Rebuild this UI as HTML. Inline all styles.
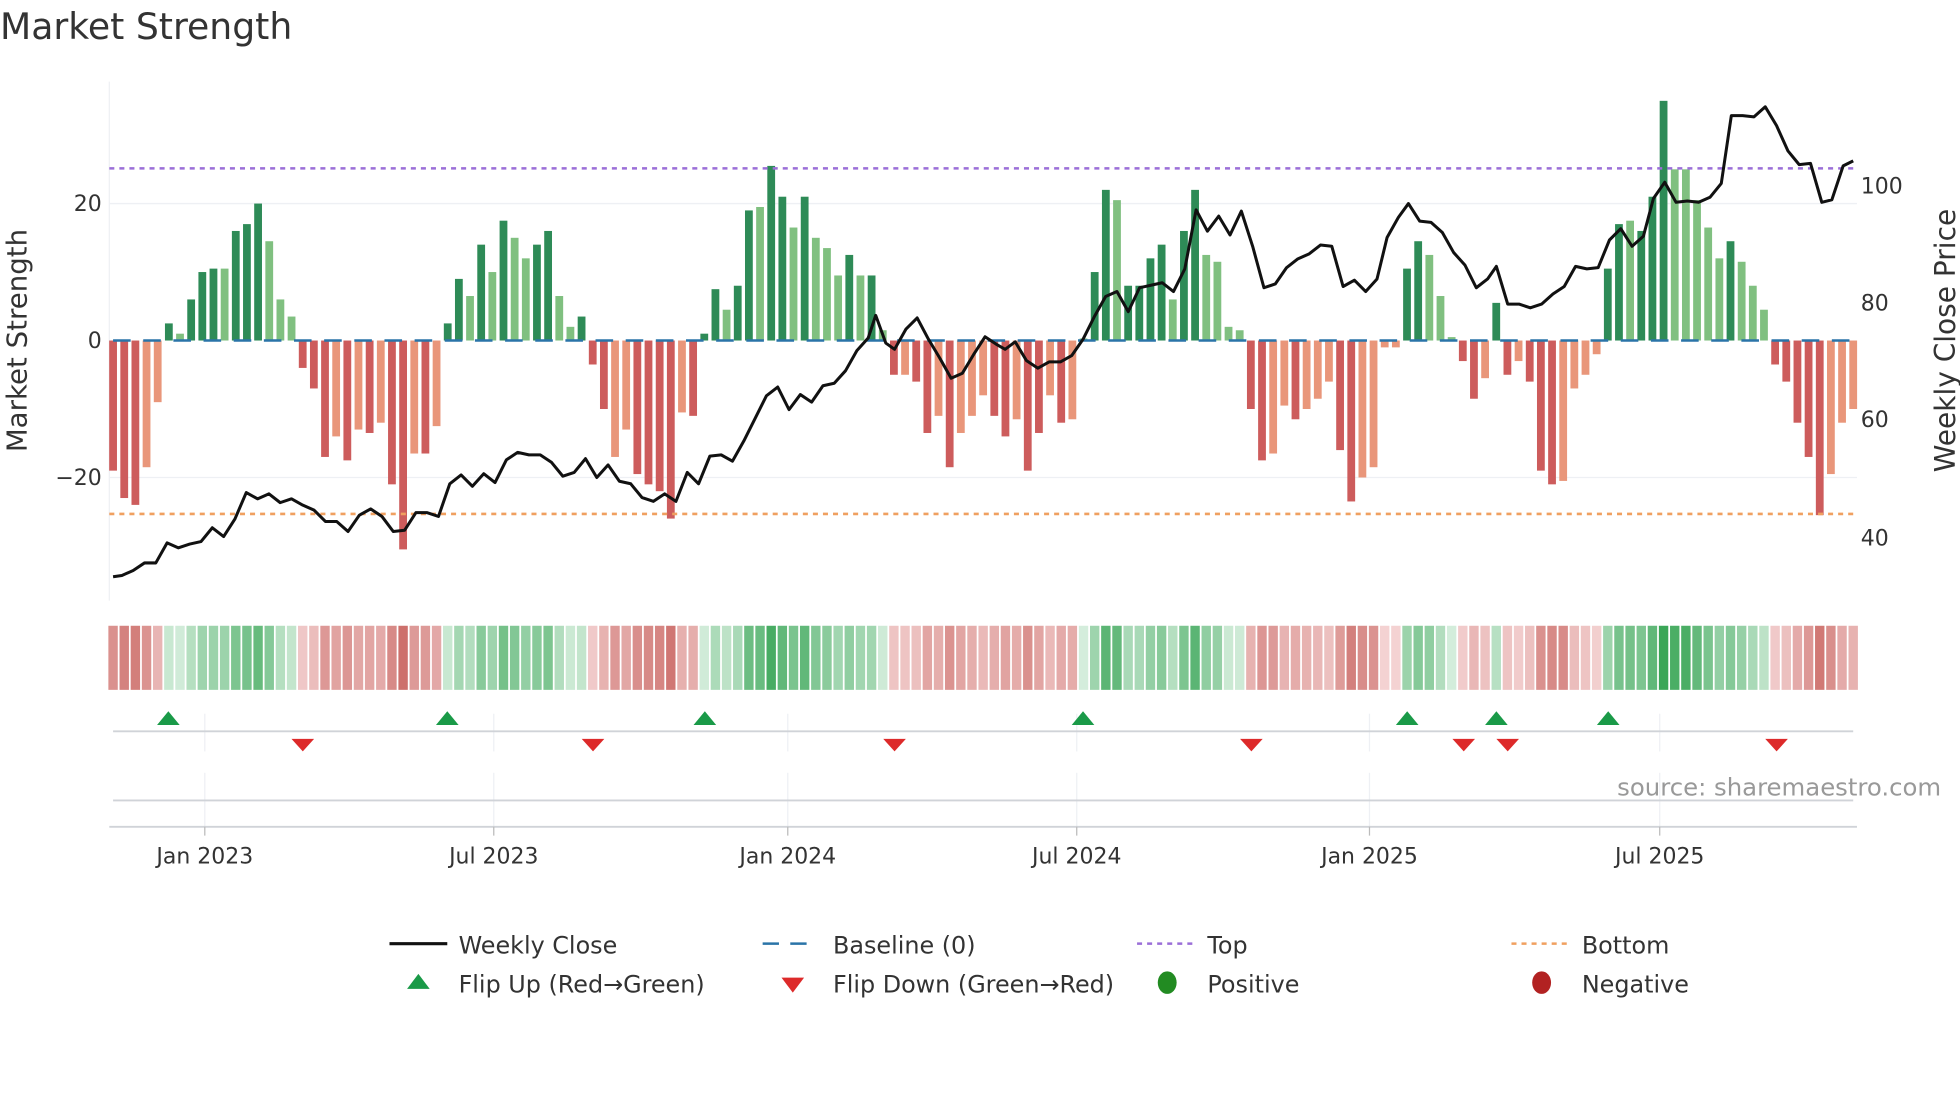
<!DOCTYPE html>
<html><head><meta charset="utf-8"><style>
html,body{margin:0;padding:0;background:#fff;width:1960px;height:1102px;overflow:hidden}
svg{display:block;font-family:"DejaVu Sans","Liberation Sans",sans-serif}
</style></head><body>
<svg id="s" width="1960" height="1102" viewBox="0 0 1560 877" preserveAspectRatio="none" xmlns="http://www.w3.org/2000/svg">
<text x="0" y="31" font-size="28.8" fill="#333">Market Strength</text>
<g stroke="#eef0f4" stroke-width="1">
<line x1="87" y1="162" x2="1478" y2="162"/><line x1="87" y1="380" x2="1478" y2="380"/>
<line x1="87" y1="65" x2="87" y2="478"/>
</g>
<g id="bars"></g>
<line x1="87" y1="134" x2="1478" y2="134" stroke="#9b6fd8" stroke-width="2" stroke-dasharray="4 4"/>
<line x1="87" y1="409" x2="1478" y2="409" stroke="#f0a060" stroke-width="2" stroke-dasharray="4 4"/>
<line x1="90" y1="271" x2="1478" y2="271" stroke="#2a74a8" stroke-width="2" stroke-dasharray="14 10"/>
<polyline id="price" fill="none" stroke="#111" stroke-width="2.4" stroke-linejoin="round"/>
<g font-size="17.5" fill="#333">
<text x="81" y="168" text-anchor="end">20</text>
<text x="81" y="277" text-anchor="end">0</text>
<text x="81" y="386" text-anchor="end">−20</text>
<text x="1481" y="154">100</text><text x="1481" y="247">80</text>
<text x="1481" y="340">60</text><text x="1481" y="434">40</text>
</g>
<text transform="translate(21,271) rotate(-90)" text-anchor="middle" font-size="22" fill="#333">Market Strength</text>
<text transform="translate(1556,271) rotate(-90)" text-anchor="middle" font-size="22.3" fill="#333">Weekly Close Price</text>
<g id="heat"></g>
<g stroke="#eef0f4" stroke-width="1" id="vg"></g>
<line x1="90" y1="582" x2="1475" y2="582" stroke="#d0d3d8" stroke-width="1.5"/>
<line x1="90" y1="637" x2="1475" y2="637" stroke="#d0d3d8" stroke-width="1.5"/>
<line x1="87" y1="658" x2="1478" y2="658" stroke="#d0d3d8" stroke-width="1.5"/>
<g id="flips"></g>
<text x="1545" y="633" text-anchor="end" font-size="19.4" fill="#999">source: sharemaestro.com</text>
<g font-size="17.5" fill="#333" text-anchor="middle" id="ticks"></g>
<g font-size="19" fill="#333">
<line x1="310" y1="751" x2="356" y2="751" stroke="#111" stroke-width="2.5"/><text x="365" y="759">Weekly Close</text>
<line x1="607" y1="751" x2="651" y2="751" stroke="#2a74a8" stroke-width="2" stroke-dasharray="13 9"/><text x="663" y="759">Baseline (0)</text>
<line x1="905" y1="751" x2="949" y2="751" stroke="#9b6fd8" stroke-width="2" stroke-dasharray="4 4"/><text x="961" y="759">Top</text>
<line x1="1203" y1="751" x2="1247" y2="751" stroke="#f0a060" stroke-width="2" stroke-dasharray="4 4"/><text x="1259" y="759">Bottom</text>
<polygon points="324,787 342,787 333,775" fill="#1a9a48"/><text x="365" y="790">Flip Up (Red→Green)</text>
<polygon points="622,778 640,778 631,790" fill="#dd2a2a"/><text x="663" y="790">Flip Down (Green→Red)</text>
<ellipse cx="929" cy="782" rx="7.5" ry="9" fill="#228b22"/><text x="961" y="790">Positive</text>
<ellipse cx="1227" cy="782" rx="7.5" ry="9" fill="#b22222"/><text x="1259" y="790">Negative</text>
</g>
</svg>
<script>
var NS="http://www.w3.org/2000/svg";
function el(t,a,p){var e=document.createElementNS(NS,t);for(var k in a)e.setAttribute(k,a[k]);document.getElementById(p).appendChild(e);return e;}
var V=[[-19,1],[-23,1],[-24,1],[-18.5,0],[-9,0],[2.5,1],[1,0],[6,1],[10,1],[10.5,1],[10.5,0],[16,1],[17,1],[20,1],[14.5,0],[6,0],[3.5,0],
[-4,1],[-7,1],[-17,1],[-14,0],[-17.5,1],[-13,0],[-13.5,1],[-12,0],[-21,1],[-30.5,1],[-16.5,0],[-16.5,1],[-12.5,0],
[2.5,1],[9,1],[6.5,0],[14,1],[10,0],[17.5,1],[15,0],[12,0],[14,1],[16,1],[6.5,0],[2,0],[3.5,1],
[-3.5,1],[-10,1],[-17,0],[-13,0],[-19.5,1],[-21,1],[-22,1],[-26,1],[-10.5,0],[-11,1],
[1,1],[7.5,1],[4.5,0],[8,1],[19,1],[19.5,0],[25.5,1],[21,1],[16.5,0],[21,1],[15,0],[13.5,0],[9.5,0],[12.5,1],[9.5,0],[9.5,1],[1.5,0],
[-5,1],[-5,0],[-6,1],[-13.5,1],[-11,0],[-18.5,1],[-13.5,0],[-11,0],[-8,0],[-11,1],[-14,1],[-11.5,0],[-19,1],[-13.5,1],[-8,0],[-12,1],[-11.5,0],
[0.3,0],[10,1],[22,1],[20.5,0],[8,1],[8,1],[12,1],[14,1],[6,0],[16,1],[22,1],[12.5,0],[11.5,0],[2,0],[1.5,0],
[-10,1],[-17.5,1],[-16.5,0],[-9.5,0],[-11.5,1],[-10,0],[-8.5,0],[-6,0],[-16,1],[-23.5,1],[-20,0],[-18.5,0],[-1,0],[-1,0],
[10.5,1],[14.5,1],[12.5,0],[6.5,0],[0.5,0],[-3,1],[-8.5,1],[-5.5,0],[5.5,1],[-5,1],[-3,0],[-6,1],[-19,1],[-21,1],[-20.5,0],[-7,0],[-5,0],[-2,0],
[10.5,1],[17,1],[17.5,0],[16,1],[21,1],[35,1],[25,0],[25,0],[20.5,0],[16.5,0],[12,0],[14.5,1],[11.5,0],[8,0],[4.5,0],
[-3.5,1],[-6,1],[-12,1],[-17,1],[-25.5,1],[-19.5,0],[-12,0],[-10,0]];
var n=V.length,x0=90,x1=1475,dx=(x1-x0)/(n-1);
function mix(a,b,t){return "rgb("+a.map(function(v,i){return Math.round(v+(b[i]-v)*t)}).join(",")+")";}
V.forEach(function(d,i){var v=d[0],x=x0+i*dx;var h=Math.abs(v)*5.45;
var c=v>=0?(d[1]?"#2e8b57":"#80c080"):(d[1]?"#cd5c5c":"#e9967a");
el("rect",{x:x-3.1,y:v>=0?271-h:271,width:6.2,height:h,fill:c},"bars");
var t=Math.min(Math.abs(v)/28,1);
var hc=v>=0?mix([214,238,221],[58,166,87],t):mix([245,214,214],[205,112,108],t);
el("rect",{x:x-dx/2+0.7,y:498,width:dx-1.4,height:51,fill:hc},"heat");});
var P=[[90,459],[97,458],[106,454],[115,448],[124,448],[133,432],[142,436],[151,433],[160,431],[169,420],[178,427],[187,413],[196,392],[205,397],[214,393],[223,400],[232,397],[241,402],[250,406],[259,415],[268,415],[277,423],[286,410],[295,405],[304,411],[313,423],[322,422],[331,408],[340,408],[349,411],[358,385],[367,378],[376,387],[385,377],[394,384],[403,366],[412,360],[421,362],[430,362],[439,368],[448,379],[457,376],[466,365],[475,380],[484,370],[493,383],[502,385],[511,396],[520,399],[529,393],[538,399],[547,376],[556,385],[565,363],[574,362],[583,367],[592,351],[601,333],[610,315],[619,308],[628,326],[637,314],[646,320],[655,307],[664,305],[673,295],[682,279],[691,269],[697,251],[705,273],[712,278],[721,262],[730,253],[739,270],[748,285],[757,301],[766,297],[775,282],[784,268],[793,274],[800,278],[808,272],[817,287],[826,293],[835,288],[844,288],[853,283],[862,270],[871,252],[880,236],[889,232],[898,248],[907,229],[916,227],[925,225],[934,232],[943,214],[952,167],[961,184],[970,172],[979,187],[988,168],[997,196],[1006,229],[1015,226],[1024,213],[1033,206],[1042,202],[1051,195],[1060,196],[1069,228],[1078,223],[1087,232],[1096,222],[1104,189],[1113,173],[1121,162],[1130,176],[1139,177],[1148,185],[1157,201],[1166,211],[1175,229],[1184,222],[1191,212],[1200,242],[1209,242],[1218,245],[1227,242],[1236,234],[1245,228],[1254,212],[1263,214],[1272,213],[1281,191],[1290,182],[1299,196],[1308,188],[1316,158],[1325,145],[1334,161],[1343,160],[1352,161],[1361,157],[1370,146],[1378,92],[1387,92],[1396,93],[1405,85],[1414,100],[1423,120],[1432,131],[1441,130],[1450,161],[1458,159],[1467,132],[1475,128]];
document.getElementById("price").setAttribute("points",P.map(function(p){return p.join(",")}).join(" "));
var T=[[163,"Jan 2023"],[393,"Jul 2023"],[627,"Jan 2024"],[857,"Jul 2024"],[1090,"Jan 2025"],[1321,"Jul 2025"]];
T.forEach(function(t){el("line",{x1:t[0],y1:568,x2:t[0],y2:598},"vg");el("line",{x1:t[0],y1:615,x2:t[0],y2:658},"vg");
el("line",{x1:t[0],y1:658,x2:t[0],y2:665,stroke:"#bbb","stroke-width":1},"ticks");
var tx=el("text",{x:t[0],y:687},"ticks");tx.textContent=t[1];});
[134,356,561,862,1120,1191,1280].forEach(function(x){el("polygon",{points:(x-9)+",577 "+(x+9)+",577 "+x+",566",fill:"#1a9a48"},"flips");});
[241,472,712,996,1165,1200,1414].forEach(function(x){el("polygon",{points:(x-9)+",588 "+(x+9)+",588 "+x+",598",fill:"#dd2a2a"},"flips");});
</script>
</body></html>
